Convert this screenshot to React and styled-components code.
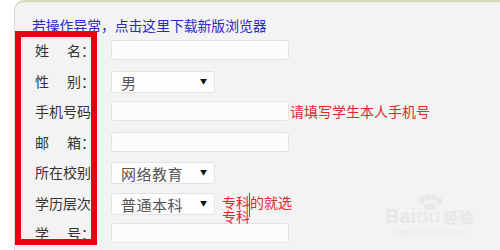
import styled, { createGlobalStyle } from "styled-components";

const GlobalStyle = createGlobalStyle`
  html, body {
    margin: 0;
    padding: 0;
    background: #ffffff;
    font-family: "Noto Sans CJK SC", "Noto Sans", sans-serif;
  }
`;

const fields = [
  { label: "姓名", type: "input" },
  { label: "性别", type: "select", value: "男" },
  { label: "手机号码", type: "input", hint: "请填写学生本人手机号" },
  { label: "邮箱", type: "input" },
  { label: "所在校别", type: "select", value: "网络教育" },
  { label: "学历层次", type: "select", value: "普通本科", note: "专科的就选专科" },
  { label: "学号", type: "input" },
];

function FieldLabel({ text }) {
  if (text.length === 2) {
    return (
      <Label>
        <Spread>{text[0]}</Spread>
        {text[1]}：
      </Label>
    );
  }
  return <Label>{text}：</Label>;
}

export default function App() {
  return (
    <>
      <GlobalStyle />
      <Page>
        <Panel>
          <Notice href="#">若操作异常，点击这里下载新版浏览器</Notice>
          <Form>
            {fields.map((f) => (
              <Row key={f.label}>
                <FieldLabel text={f.label} />
                {f.type === "input" ? (
                  <TextInput />
                ) : (
                  <SelectWrap>
                    <Select defaultValue={f.value}>
                      <option>{f.value}</option>
                    </Select>
                    <Arrow>▼</Arrow>
                  </SelectWrap>
                )}
                {f.hint && <Hint>{f.hint}</Hint>}
                {f.note && (
                  <Note>
                    {f.note}
                    <Caret />
                  </Note>
                )}
              </Row>
            ))}
          </Form>
          <Highlight />
          <Watermark>
            <svg width="30" height="16" viewBox="0 0 30 16">
              <g fill="#e8e8e8">
                <ellipse cx="8" cy="6" rx="3" ry="4" />
                <ellipse cx="14" cy="3" rx="3" ry="3.5" />
                <ellipse cx="20" cy="3" rx="3" ry="3.5" />
                <ellipse cx="25" cy="7" rx="3" ry="4" />
                <ellipse cx="16" cy="13" rx="6" ry="4" />
              </g>
            </svg>
            <Brand>
              Bai<Paw>du</Paw>
              <BrandCn>经验</BrandCn>
            </Brand>
            <Site>jingyan.baidu.com</Site>
          </Watermark>
        </Panel>
      </Page>
    </>
  );
}

const Page = styled.div`
  width: 500px;
  height: 250px;
  padding-left: 14px;
  box-sizing: border-box;
  overflow: hidden;
`;

const Panel = styled.div`
  position: relative;
  height: 252px;
  background: #f3f3f4;
  border-left: 1px solid #dadada;
  border-top: 2px solid #cfd9b4;
  border-top-left-radius: 10px;
  box-shadow: inset 0 1px 0 #eaf0dc;
  padding-left: 20px;
  box-sizing: border-box;
`;

const Notice = styled.a`
  display: block;
  margin-left: -3px;
  padding-top: 13px;
  font-size: 13.8px;
  line-height: 20px;
  color: #2a2ac4;
  text-decoration: none;
`;

const Form = styled.div`
  display: flex;
  flex-direction: column;
`;

const Row = styled.div`
  display: flex;
  align-items: center;
  height: 30.5px;
`;

const Label = styled.span`
  width: 76px;
  flex-shrink: 0;
  font-size: 14px;
  line-height: 20px;
  color: #333;
  white-space: nowrap;
`;

const Spread = styled.span`
  margin-right: 18px;
`;

const TextInput = styled.input`
  width: 178px;
  height: 20px;
  box-sizing: border-box;
  border: 1px solid #e3e3e3;
  border-radius: 3px;
  background: #fcfcfc;
  outline: none;
`;

const SelectWrap = styled.div`
  position: relative;
  width: 104px;
  height: 22px;
`;

const Select = styled.select`
  appearance: none;
  width: 100%;
  height: 100%;
  box-sizing: border-box;
  border: 1px solid #e3e3e3;
  border-radius: 3px;
  background: #fdfdfd;
  padding: 0 0 0 9px;
  font-family: "Noto Sans CJK SC", sans-serif;
  font-size: 15px;
  letter-spacing: 0.5px;
  color: #555;
  outline: none;
`;

const Arrow = styled.span`
  position: absolute;
  right: 8px;
  top: 7px;
  font-size: 7px;
  line-height: 9px;
  color: #111;
  pointer-events: none;
`;

const Hint = styled.span`
  margin-left: 1px;
  font-size: 14px;
  line-height: 20px;
  color: #e02a2a;
  white-space: nowrap;
`;

const Note = styled.span`
  position: relative;
  margin-left: 7px;
  width: 72px;
  font-size: 14px;
  line-height: 14px;
  color: #e02a2a;
  padding-top: 12px;
`;

const Caret = styled.span`
  position: absolute;
  left: 27px;
  top: 10px;
  height: 24px;
  border-left: 1px solid #e02a2a;
`;

const Highlight = styled.div`
  position: absolute;
  left: 0;
  top: 29px;
  width: 82px;
  height: 214px;
  box-sizing: border-box;
  border: 6px solid #e60010;
`;

const Watermark = styled.div`
  position: absolute;
  left: 370px;
  top: 192px;
  display: flex;
  flex-direction: column;
  align-items: center;
`;

const Brand = styled.div`
  margin-top: -4px;
  font-family: "Liberation Sans", sans-serif;
  font-weight: bold;
  font-size: 20px;
  line-height: 20px;
  color: #e7e7e7;
`;

const Paw = styled.span`
  color: #eaeaea;
`;

const BrandCn = styled.span`
  margin-left: 3px;
  font-family: "Noto Sans CJK SC", sans-serif;
  font-size: 15px;
`;

const Site = styled.div`
  font-family: "Liberation Sans", sans-serif;
  font-size: 9px;
  line-height: 11px;
  color: #e9e9e9;
`;
